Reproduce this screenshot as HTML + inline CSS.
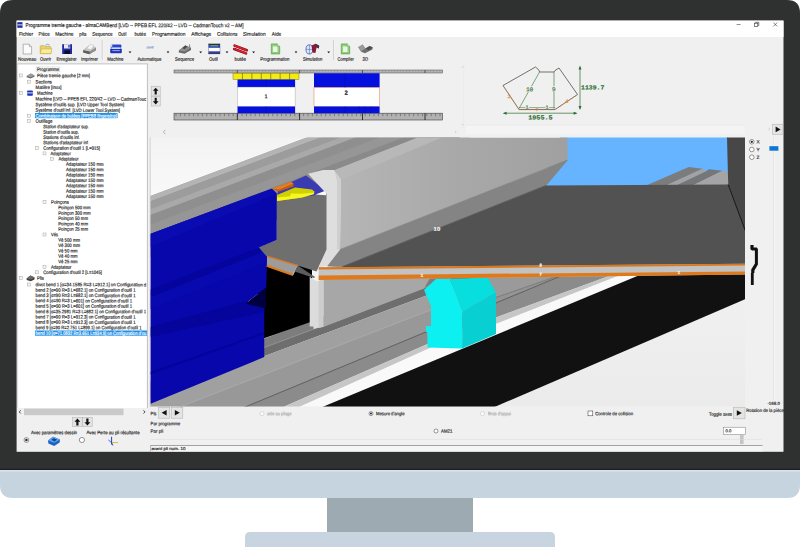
<!DOCTYPE html>
<html lang="fr"><head><meta charset="utf-8"><title>almaCAM Bend</title>
<style>html,body{margin:0;padding:0;background:#fff;}svg{display:block;}text{white-space:pre;}</style></head>
<body>
<svg width="800" height="547" viewBox="0 0 800 547" font-family="'Liberation Sans', sans-serif" text-rendering="geometricPrecision">
<defs>
<clipPath id="vp"><rect x="150.5" y="137.5" width="594.5" height="268.9"/></clipPath>
<clipPath id="lowclip"><polygon points="150,236 318.7,236 318.7,268.5 746,266 746,410 150,410"/></clipPath>
<clipPath id="tree"><rect x="17.5" y="63.7" width="129.5" height="344.2"/></clipPath>
<linearGradient id="gpunch" x1="0" y1="0" x2="1" y2="0"><stop offset="0" stop-color="#b6b6b6"/><stop offset="0.5" stop-color="#a9a9a9"/><stop offset="1" stop-color="#a0a0a0"/></linearGradient>
<linearGradient id="gbg" x1="0" y1="0" x2="0" y2="1"><stop offset="0" stop-color="#f3f3f3"/><stop offset="0.25" stop-color="#fafafa"/><stop offset="0.6" stop-color="#f0f0f0"/><stop offset="1" stop-color="#ebebeb"/></linearGradient>
</defs>
<rect x="0.00" y="0.00" width="800.00" height="547.00" fill="#ffffff" />
<path d="M0,470 V13 Q0,0 13,0 H787 Q800,0 800,13 V470 Z" fill="#2f3030"/>
<rect x="0.00" y="468.80" width="800.00" height="1.40" fill="#1d1d24" />
<path d="M0,470.2 H800 V485 Q800,498 787,498 H13 Q0,498 0,485 Z" fill="#c6d4df"/>
<rect x="0.00" y="470.20" width="800.00" height="1.20" fill="#dde6ee" />
<rect x="327.00" y="498.00" width="146.00" height="34.00" fill="#9daab2" />
<path d="M245,547 V537 Q245,532 250,532 H550 Q555,532 555,537 V547 Z" fill="#c8d5e0"/>
<rect x="16.60" y="20.60" width="766.90" height="431.20" fill="#f0f0f0" />
<rect x="16.60" y="20.60" width="766.90" height="16.40" fill="#ffffff" />
<rect x="17.30" y="22.20" width="5.20" height="5.60" fill="#1c2f9c" />
<rect x="17.30" y="24.40" width="5.20" height="1.00" fill="#e8e8ff" />
<text x="25.50" y="27.02" transform="rotate(0.08 25.50 27.02)" font-size="5.4" fill="#222" textLength="218.00" lengthAdjust="spacingAndGlyphs" stroke="#222" stroke-width="0.16" >Programme tremie gauche - almaCAMBend [LVD -- PPEB EFL 220/42 -- LVD -- CadmanTouch v2 -- AM]</text>
<line x1="736.60" y1="24.50" x2="740.60" y2="24.50" stroke="#444" stroke-width="0.6" />
<rect x="754.6" y="23.2" width="3.2" height="3.2" fill="none" stroke="#333" stroke-width="0.6"/>
<path d="M755.6,23.2 V22.3 H758.8 V25.5 H757.8" fill="none" stroke="#333" stroke-width="0.6"/>
<line x1="773.40" y1="22.60" x2="777.20" y2="26.40" stroke="#333" stroke-width="0.6" />
<line x1="777.20" y1="22.60" x2="773.40" y2="26.40" stroke="#333" stroke-width="0.6" />
<text x="19.00" y="35.65" transform="rotate(0.08 19.00 35.65)" font-size="5.2" fill="#222" textLength="14.00" lengthAdjust="spacingAndGlyphs" stroke="#222" stroke-width="0.16" >Fichier</text>
<text x="38.60" y="35.65" transform="rotate(0.08 38.60 35.65)" font-size="5.2" fill="#222" textLength="11.00" lengthAdjust="spacingAndGlyphs" stroke="#222" stroke-width="0.16" >Pièce</text>
<text x="55.30" y="35.65" transform="rotate(0.08 55.30 35.65)" font-size="5.2" fill="#222" textLength="18.20" lengthAdjust="spacingAndGlyphs" stroke="#222" stroke-width="0.16" >Machine</text>
<text x="79.20" y="35.65" transform="rotate(0.08 79.20 35.65)" font-size="5.2" fill="#222" textLength="7.30" lengthAdjust="spacingAndGlyphs" stroke="#222" stroke-width="0.16" >plis</text>
<text x="92.20" y="35.65" transform="rotate(0.08 92.20 35.65)" font-size="5.2" fill="#222" textLength="20.30" lengthAdjust="spacingAndGlyphs" stroke="#222" stroke-width="0.16" >Sequence</text>
<text x="118.20" y="35.65" transform="rotate(0.08 118.20 35.65)" font-size="5.2" fill="#222" textLength="8.10" lengthAdjust="spacingAndGlyphs" stroke="#222" stroke-width="0.16" >Outil</text>
<text x="134.40" y="35.65" transform="rotate(0.08 134.40 35.65)" font-size="5.2" fill="#222" textLength="11.60" lengthAdjust="spacingAndGlyphs" stroke="#222" stroke-width="0.16" >butée</text>
<text x="152.00" y="35.65" transform="rotate(0.08 152.00 35.65)" font-size="5.2" fill="#222" textLength="33.50" lengthAdjust="spacingAndGlyphs" stroke="#222" stroke-width="0.16" >Programmation</text>
<text x="191.25" y="35.65" transform="rotate(0.08 191.25 35.65)" font-size="5.2" fill="#222" textLength="20.00" lengthAdjust="spacingAndGlyphs" stroke="#222" stroke-width="0.16" >Affichage</text>
<text x="217.00" y="35.65" transform="rotate(0.08 217.00 35.65)" font-size="5.2" fill="#222" textLength="20.50" lengthAdjust="spacingAndGlyphs" stroke="#222" stroke-width="0.16" >Collisions</text>
<text x="243.00" y="35.65" transform="rotate(0.08 243.00 35.65)" font-size="5.2" fill="#222" textLength="22.75" lengthAdjust="spacingAndGlyphs" stroke="#222" stroke-width="0.16" >Simulation</text>
<text x="271.75" y="35.65" transform="rotate(0.08 271.75 35.65)" font-size="5.2" fill="#222" textLength="9.50" lengthAdjust="spacingAndGlyphs" stroke="#222" stroke-width="0.16" >Aide</text>
<line x1="102.30" y1="40.00" x2="102.30" y2="60.00" stroke="#b8b8b8" stroke-width="0.7" />
<line x1="103.00" y1="40.00" x2="103.00" y2="60.00" stroke="#ffffff" stroke-width="0.5" />
<line x1="333.70" y1="40.00" x2="333.70" y2="60.00" stroke="#b8b8b8" stroke-width="0.7" />
<line x1="334.40" y1="40.00" x2="334.40" y2="60.00" stroke="#ffffff" stroke-width="0.5" />
<text x="18.00" y="60.84" transform="rotate(0.08 18.00 60.84)" font-size="4.9" fill="#222" textLength="18.20" lengthAdjust="spacingAndGlyphs" stroke="#222" stroke-width="0.16" >Nouveau</text>
<text x="40.00" y="60.84" transform="rotate(0.08 40.00 60.84)" font-size="4.9" fill="#222" textLength="11.20" lengthAdjust="spacingAndGlyphs" stroke="#222" stroke-width="0.16" >Ouvrir</text>
<text x="56.40" y="60.84" transform="rotate(0.08 56.40 60.84)" font-size="4.9" fill="#222" textLength="20.30" lengthAdjust="spacingAndGlyphs" stroke="#222" stroke-width="0.16" >Enregistrer</text>
<text x="81.00" y="60.84" transform="rotate(0.08 81.00 60.84)" font-size="4.9" fill="#222" textLength="17.00" lengthAdjust="spacingAndGlyphs" stroke="#222" stroke-width="0.16" >Imprimer</text>
<text x="107.30" y="60.84" transform="rotate(0.08 107.30 60.84)" font-size="4.9" fill="#222" textLength="16.20" lengthAdjust="spacingAndGlyphs" stroke="#222" stroke-width="0.16" >Machine</text>
<text x="137.40" y="60.84" transform="rotate(0.08 137.40 60.84)" font-size="4.9" fill="#222" textLength="24.00" lengthAdjust="spacingAndGlyphs" stroke="#222" stroke-width="0.16" >Automatique</text>
<text x="175.00" y="60.84" transform="rotate(0.08 175.00 60.84)" font-size="4.9" fill="#222" textLength="19.00" lengthAdjust="spacingAndGlyphs" stroke="#222" stroke-width="0.16" >Sequence</text>
<text x="209.00" y="60.84" transform="rotate(0.08 209.00 60.84)" font-size="4.9" fill="#222" textLength="8.80" lengthAdjust="spacingAndGlyphs" stroke="#222" stroke-width="0.16" >Outil</text>
<text x="234.60" y="60.84" transform="rotate(0.08 234.60 60.84)" font-size="4.9" fill="#222" textLength="11.40" lengthAdjust="spacingAndGlyphs" stroke="#222" stroke-width="0.16" >butée</text>
<text x="260.30" y="60.84" transform="rotate(0.08 260.30 60.84)" font-size="4.9" fill="#222" textLength="29.20" lengthAdjust="spacingAndGlyphs" stroke="#222" stroke-width="0.16" >Programmation</text>
<text x="302.90" y="60.84" transform="rotate(0.08 302.90 60.84)" font-size="4.9" fill="#222" textLength="19.50" lengthAdjust="spacingAndGlyphs" stroke="#222" stroke-width="0.16" >Simulation</text>
<text x="337.50" y="60.84" transform="rotate(0.08 337.50 60.84)" font-size="4.9" fill="#222" textLength="16.25" lengthAdjust="spacingAndGlyphs" stroke="#222" stroke-width="0.16" >Compiler</text>
<text x="362.50" y="60.84" transform="rotate(0.08 362.50 60.84)" font-size="4.9" fill="#222" textLength="5.50" lengthAdjust="spacingAndGlyphs" stroke="#222" stroke-width="0.16" >3D</text>
<polygon points="128.60,51.60 131.40,51.60 130.00,53.30" fill="#111" />
<polygon points="166.60,51.60 169.40,51.60 168.00,53.30" fill="#111" />
<polygon points="199.30,51.60 202.10,51.60 200.70,53.30" fill="#111" />
<polygon points="225.60,51.60 228.40,51.60 227.00,53.30" fill="#111" />
<polygon points="252.20,51.60 255.00,51.60 253.60,53.30" fill="#111" />
<polygon points="294.60,51.60 297.40,51.60 296.00,53.30" fill="#111" />
<polygon points="327.30,51.60 330.10,51.60 328.70,53.30" fill="#111" />
<path d="M23.2,44.2 H29.3 L31.6,46.6 V54 H23.2 Z" fill="#fbfbfb" stroke="#8a8a8a" stroke-width="0.6"/>
<path d="M29.3,44.2 V46.6 H31.6" fill="#e4e4e4" stroke="#8a8a8a" stroke-width="0.5"/>
<path d="M40.2,53.6 V46.6 Q40.2,45.6 41.2,45.6 H44 L45,46.6 H50 Q51,46.6 51,47.6 V53.6 Z" fill="#e9d36a" stroke="#b89b2e" stroke-width="0.5"/>
<path d="M40.2,53.6 L41.6,48.8 H52 L50.8,53.6 Z" fill="#f7eb9c" stroke="#c3a93a" stroke-width="0.5"/>
<path d="M45.5,45.2 Q47.5,43.4 49.6,45.2" fill="none" stroke="#4aa0e0" stroke-width="0.8"/>
<rect x="62.20" y="44.20" width="9.80" height="9.80" fill="#1c2a9e" />
<rect x="64.00" y="44.20" width="6.20" height="4.30" fill="#e8e8f4" />
<rect x="64.40" y="50.40" width="5.60" height="3.60" fill="#0c0c30" />
<rect x="68.40" y="45.00" width="1.20" height="2.60" fill="#1c2a9e" />
<polygon points="83.20,50.20 89.50,45.20 96.00,47.60 96.00,50.40 89.60,54.20 83.20,52.60" fill="#8d8d8d" />
<polygon points="83.20,50.20 89.50,45.20 96.00,47.60 89.60,51.60" fill="#c9c9c9" />
<polygon points="86.50,48.40 90.50,44.20 94.00,45.60 91.00,49.80" fill="#f4f4f4" stroke="#999" stroke-width="0.3"/>
<polygon points="83.20,50.20 89.60,51.60 89.60,54.20 83.20,52.60" fill="#5e5e5e" />
<rect x="110.60" y="44.40" width="10.80" height="3.40" fill="#2a46c8" rx="1"/>
<rect x="110.20" y="48.60" width="11.60" height="4.60" fill="#1f36b4" rx="1"/>
<rect x="112.00" y="47.60" width="8.00" height="1.20" fill="#dfe6ff" />
<rect x="112.40" y="50.20" width="7.40" height="0.90" fill="#9fb4ff" />
<rect x="110.20" y="44.60" width="2.20" height="2.20" fill="#e9efff" rx="1"/>
<text x="146.60" y="48.54" transform="rotate(0.08 146.60 48.54)" font-size="3.2" fill="#8ea0d6" textLength="7.00" lengthAdjust="spacingAndGlyphs" font-weight="bold" stroke="#8ea0d6" stroke-width="0.16" font-style="italic">Swift</text>
<polygon points="178.80,50.60 185.20,45.60 191.00,47.80 191.00,50.00 184.60,53.80 178.80,52.60" fill="#6a6a6a" />
<polygon points="178.80,50.60 185.20,45.60 191.00,47.80 184.60,51.60" fill="#8f8f8f" />
<polygon points="182.20,48.20 185.20,45.60 187.60,46.60 184.80,49.20" fill="#4c4c4c" />
<line x1="189.60" y1="44.40" x2="189.60" y2="47.00" stroke="#444" stroke-width="0.6" />
<rect x="208.60" y="43.90" width="11.40" height="10.00" fill="#ffffff" stroke="#555" stroke-width="0.4"/>
<rect x="208.60" y="43.90" width="11.40" height="1.20" fill="#303030" />
<rect x="208.60" y="45.10" width="11.40" height="2.70" fill="#2a3cc0" />
<rect x="210.40" y="45.30" width="7.60" height="1.10" fill="#6bb84a" />
<rect x="208.60" y="51.30" width="11.40" height="1.80" fill="#2a3cc0" />
<rect x="208.60" y="53.10" width="11.40" height="0.90" fill="#303030" />
<path d="M234.6,45.6 L246.8,50.2" stroke="#7a0a12" stroke-width="2.6" stroke-linecap="round"/>
<path d="M234.6,45.6 L246.8,50.2" stroke="#d8202c" stroke-width="1.7" stroke-linecap="round"/>
<path d="M234.2,49 L246,53.4" stroke="#7a0a12" stroke-width="2.6" stroke-linecap="round"/>
<path d="M234.2,49 L246,53.4" stroke="#d8202c" stroke-width="1.7" stroke-linecap="round"/>
<path d="M271.3,43.9 H277.1 L279.7,46.4 V53.9 H271.3 Z" fill="#8ed07a" stroke="#4f8f3e" stroke-width="0.6"/>
<rect x="272.90" y="46.40" width="4.60" height="5.60" fill="#e9f7e2" />
<path d="M277.1,43.9 V46.4 H279.7" fill="#c9ecc0" stroke="#4f8f3e" stroke-width="0.4"/>
<path d="M341.3,43.9 H347.1 L349.7,46.4 V53.9 H341.3 Z" fill="#8ed07a" stroke="#4f8f3e" stroke-width="0.6"/>
<rect x="342.90" y="46.40" width="4.60" height="5.60" fill="#e9f7e2" />
<path d="M347.1,43.9 V46.4 H349.7" fill="#c9ecc0" stroke="#4f8f3e" stroke-width="0.4"/>
<ellipse cx="309.4" cy="49.4" rx="3.4" ry="4.6" fill="#dfe9f7" stroke="#3c57b0" stroke-width="0.8"/>
<line x1="309.40" y1="45.00" x2="309.40" y2="54.00" stroke="#3c57b0" stroke-width="0.5" />
<line x1="306.00" y1="49.40" x2="312.80" y2="49.40" stroke="#3c57b0" stroke-width="0.5" />
<polygon points="311.60,45.40 315.60,43.80 319.20,45.80 318.80,48.60 316.60,47.40 315.40,53.00 312.40,52.40" fill="#8a1838" />
<polygon points="315.60,43.80 319.20,45.80 318.80,48.60 317.00,47.20" fill="#3a3a46" />
<polygon points="358.20,47.20 362.60,44.60 365.40,48.40 369.60,46.00 372.80,47.60 372.40,49.60 365.00,53.20 361.20,51.80" fill="#6f6f6f" />
<polygon points="358.20,47.20 362.60,44.60 365.40,48.40 361.20,51.20" fill="#9a9a9a" />
<polygon points="365.40,48.40 369.60,46.00 372.80,47.60 368.60,50.20" fill="#4e4e4e" />
<rect x="17.50" y="63.70" width="129.80" height="344.20" fill="#ffffff" />
<line x1="147.40" y1="63.70" x2="147.40" y2="408.00" stroke="#9a9a9a" stroke-width="0.6" />
<line x1="17.50" y1="63.90" x2="147.40" y2="63.90" stroke="#8c8c8c" stroke-width="0.5" />
<line x1="17.60" y1="63.70" x2="17.60" y2="408.00" stroke="#b0b0b0" stroke-width="0.4" />
<g clip-path="url(#tree)">
<rect x="35.00" y="113.00" width="82.60" height="5.20" fill="#1e90e8" />
<rect x="35.00" y="330.50" width="112.00" height="5.20" fill="#1e90e8" />
<text x="37.00" y="71.04" transform="rotate(0.08 37.00 71.04)" font-size="4.9" fill="#1a1a1a" textLength="22.20" lengthAdjust="spacingAndGlyphs" stroke="#1a1a1a" stroke-width="0.16" >Programme</text>
<text x="37.00" y="77.24" transform="rotate(0.08 37.00 77.24)" font-size="4.9" fill="#1a1a1a" textLength="53.00" lengthAdjust="spacingAndGlyphs" stroke="#1a1a1a" stroke-width="0.16" >Pièce tremie gauche [2 mm]</text>
<rect x="19.50" y="74.00" width="3" height="3" fill="#f4f4f4" stroke="#a8a8a8" stroke-width="0.5"/>
<text x="35.60" y="83.44" transform="rotate(0.08 35.60 83.44)" font-size="4.9" fill="#1a1a1a" textLength="16.40" lengthAdjust="spacingAndGlyphs" stroke="#1a1a1a" stroke-width="0.16" >Sections</text>
<rect x="27.50" y="80.20" width="3" height="3" fill="#f4f4f4" stroke="#a8a8a8" stroke-width="0.5"/>
<text x="35.60" y="89.04" transform="rotate(0.08 35.60 89.04)" font-size="4.9" fill="#1a1a1a" textLength="25.90" lengthAdjust="spacingAndGlyphs" stroke="#1a1a1a" stroke-width="0.16" >Matière [Inox]</text>
<text x="37.00" y="94.74" transform="rotate(0.08 37.00 94.74)" font-size="4.9" fill="#1a1a1a" textLength="15.50" lengthAdjust="spacingAndGlyphs" stroke="#1a1a1a" stroke-width="0.16" >Machine</text>
<rect x="19.50" y="91.50" width="3" height="3" fill="#f4f4f4" stroke="#a8a8a8" stroke-width="0.5"/>
<text x="35.60" y="100.54" transform="rotate(0.08 35.60 100.54)" font-size="4.9" fill="#1a1a1a" textLength="110.60" lengthAdjust="spacingAndGlyphs" stroke="#1a1a1a" stroke-width="0.16" >Machine [LVD -- PPEB EFL 220/42 -- LVD -- CadmanTouc</text>
<text x="35.60" y="106.24" transform="rotate(0.08 35.60 106.24)" font-size="4.9" fill="#1a1a1a" textLength="88.70" lengthAdjust="spacingAndGlyphs" stroke="#1a1a1a" stroke-width="0.16" >Système d'outils sup. [LVD Upper Tool System]</text>
<text x="35.60" y="111.84" transform="rotate(0.08 35.60 111.84)" font-size="4.9" fill="#1a1a1a" textLength="84.40" lengthAdjust="spacingAndGlyphs" stroke="#1a1a1a" stroke-width="0.16" >Système d'outil inf. [LVD Lower Tool System]</text>
<text x="35.60" y="117.44" transform="rotate(0.08 35.60 117.44)" font-size="4.9" fill="#ffffff" textLength="81.40" lengthAdjust="spacingAndGlyphs" stroke="#ffffff" stroke-width="0.16" >Combinaison de butées [PPEB8 fingerstop]</text>
<rect x="27.50" y="114.20" width="3" height="3" fill="#f4f4f4" stroke="#a8a8a8" stroke-width="0.5"/>
<text x="35.60" y="122.84" transform="rotate(0.08 35.60 122.84)" font-size="4.9" fill="#1a1a1a" textLength="16.90" lengthAdjust="spacingAndGlyphs" stroke="#1a1a1a" stroke-width="0.16" >Outillage</text>
<rect x="27.50" y="119.60" width="3" height="3" fill="#f4f4f4" stroke="#a8a8a8" stroke-width="0.5"/>
<text x="43.30" y="128.24" transform="rotate(0.08 43.30 128.24)" font-size="4.9" fill="#1a1a1a" textLength="45.70" lengthAdjust="spacingAndGlyphs" stroke="#1a1a1a" stroke-width="0.16" >Station d'adaptateur sup.</text>
<text x="43.30" y="133.64" transform="rotate(0.08 43.30 133.64)" font-size="4.9" fill="#1a1a1a" textLength="35.70" lengthAdjust="spacingAndGlyphs" stroke="#1a1a1a" stroke-width="0.16" >Station d'outils sup.</text>
<text x="43.30" y="138.94" transform="rotate(0.08 43.30 138.94)" font-size="4.9" fill="#1a1a1a" textLength="36.70" lengthAdjust="spacingAndGlyphs" stroke="#1a1a1a" stroke-width="0.16" >Stations d'outils inf.</text>
<text x="43.30" y="144.24" transform="rotate(0.08 43.30 144.24)" font-size="4.9" fill="#1a1a1a" textLength="45.70" lengthAdjust="spacingAndGlyphs" stroke="#1a1a1a" stroke-width="0.16" >Stations d'adaptateur inf.</text>
<text x="43.30" y="149.74" transform="rotate(0.08 43.30 149.74)" font-size="4.9" fill="#1a1a1a" textLength="56.70" lengthAdjust="spacingAndGlyphs" stroke="#1a1a1a" stroke-width="0.16" >Configuration d'outil 1 [L=915]</text>
<rect x="35.50" y="146.50" width="3" height="3" fill="#f4f4f4" stroke="#a8a8a8" stroke-width="0.5"/>
<text x="50.60" y="155.14" transform="rotate(0.08 50.60 155.14)" font-size="4.9" fill="#1a1a1a" textLength="20.20" lengthAdjust="spacingAndGlyphs" stroke="#1a1a1a" stroke-width="0.16" >Adaptateur</text>
<rect x="43.00" y="151.90" width="3" height="3" fill="#f4f4f4" stroke="#a8a8a8" stroke-width="0.5"/>
<text x="58.40" y="160.54" transform="rotate(0.08 58.40 160.54)" font-size="4.9" fill="#1a1a1a" textLength="20.20" lengthAdjust="spacingAndGlyphs" stroke="#1a1a1a" stroke-width="0.16" >Adaptateur</text>
<rect x="50.50" y="157.30" width="3" height="3" fill="#f4f4f4" stroke="#a8a8a8" stroke-width="0.5"/>
<text x="66.00" y="165.84" transform="rotate(0.08 66.00 165.84)" font-size="4.9" fill="#1a1a1a" textLength="37.50" lengthAdjust="spacingAndGlyphs" stroke="#1a1a1a" stroke-width="0.16" >Adaptateur 150 mm</text>
<text x="66.00" y="171.21" transform="rotate(0.08 66.00 171.21)" font-size="4.9" fill="#1a1a1a" textLength="37.50" lengthAdjust="spacingAndGlyphs" stroke="#1a1a1a" stroke-width="0.16" >Adaptateur 150 mm</text>
<text x="66.00" y="176.58" transform="rotate(0.08 66.00 176.58)" font-size="4.9" fill="#1a1a1a" textLength="37.50" lengthAdjust="spacingAndGlyphs" stroke="#1a1a1a" stroke-width="0.16" >Adaptateur 150 mm</text>
<text x="66.00" y="181.95" transform="rotate(0.08 66.00 181.95)" font-size="4.9" fill="#1a1a1a" textLength="37.50" lengthAdjust="spacingAndGlyphs" stroke="#1a1a1a" stroke-width="0.16" >Adaptateur 150 mm</text>
<text x="66.00" y="187.32" transform="rotate(0.08 66.00 187.32)" font-size="4.9" fill="#1a1a1a" textLength="37.50" lengthAdjust="spacingAndGlyphs" stroke="#1a1a1a" stroke-width="0.16" >Adaptateur 150 mm</text>
<text x="66.00" y="192.69" transform="rotate(0.08 66.00 192.69)" font-size="4.9" fill="#1a1a1a" textLength="37.50" lengthAdjust="spacingAndGlyphs" stroke="#1a1a1a" stroke-width="0.16" >Adaptateur 150 mm</text>
<text x="66.00" y="198.06" transform="rotate(0.08 66.00 198.06)" font-size="4.9" fill="#1a1a1a" textLength="37.50" lengthAdjust="spacingAndGlyphs" stroke="#1a1a1a" stroke-width="0.16" >Adaptateur 150 mm</text>
<text x="51.00" y="203.74" transform="rotate(0.08 51.00 203.74)" font-size="4.9" fill="#1a1a1a" textLength="18.00" lengthAdjust="spacingAndGlyphs" stroke="#1a1a1a" stroke-width="0.16" >Poinçons</text>
<rect x="43.00" y="200.50" width="3" height="3" fill="#f4f4f4" stroke="#a8a8a8" stroke-width="0.5"/>
<text x="58.20" y="209.24" transform="rotate(0.08 58.20 209.24)" font-size="4.9" fill="#1a1a1a" textLength="32.30" lengthAdjust="spacingAndGlyphs" stroke="#1a1a1a" stroke-width="0.16" >Poinçon 500 mm</text>
<text x="58.20" y="214.64" transform="rotate(0.08 58.20 214.64)" font-size="4.9" fill="#1a1a1a" textLength="32.30" lengthAdjust="spacingAndGlyphs" stroke="#1a1a1a" stroke-width="0.16" >Poinçon 300 mm</text>
<text x="58.20" y="220.04" transform="rotate(0.08 58.20 220.04)" font-size="4.9" fill="#1a1a1a" textLength="29.80" lengthAdjust="spacingAndGlyphs" stroke="#1a1a1a" stroke-width="0.16" >Poinçon 50 mm</text>
<text x="58.20" y="225.44" transform="rotate(0.08 58.20 225.44)" font-size="4.9" fill="#1a1a1a" textLength="29.80" lengthAdjust="spacingAndGlyphs" stroke="#1a1a1a" stroke-width="0.16" >Poinçon 40 mm</text>
<text x="58.20" y="230.84" transform="rotate(0.08 58.20 230.84)" font-size="4.9" fill="#1a1a1a" textLength="29.80" lengthAdjust="spacingAndGlyphs" stroke="#1a1a1a" stroke-width="0.16" >Poinçon 25 mm</text>
<text x="51.00" y="236.24" transform="rotate(0.08 51.00 236.24)" font-size="4.9" fill="#1a1a1a" textLength="7.00" lengthAdjust="spacingAndGlyphs" stroke="#1a1a1a" stroke-width="0.16" >Vés</text>
<rect x="43.00" y="233.00" width="3" height="3" fill="#f4f4f4" stroke="#a8a8a8" stroke-width="0.5"/>
<text x="58.20" y="241.64" transform="rotate(0.08 58.20 241.64)" font-size="4.9" fill="#1a1a1a" textLength="21.80" lengthAdjust="spacingAndGlyphs" stroke="#1a1a1a" stroke-width="0.16" >Vé 500 mm</text>
<text x="58.20" y="247.04" transform="rotate(0.08 58.20 247.04)" font-size="4.9" fill="#1a1a1a" textLength="21.80" lengthAdjust="spacingAndGlyphs" stroke="#1a1a1a" stroke-width="0.16" >Vé 300 mm</text>
<text x="58.20" y="252.44" transform="rotate(0.08 58.20 252.44)" font-size="4.9" fill="#1a1a1a" textLength="19.30" lengthAdjust="spacingAndGlyphs" stroke="#1a1a1a" stroke-width="0.16" >Vé 50 mm</text>
<text x="58.20" y="257.84" transform="rotate(0.08 58.20 257.84)" font-size="4.9" fill="#1a1a1a" textLength="19.30" lengthAdjust="spacingAndGlyphs" stroke="#1a1a1a" stroke-width="0.16" >Vé 40 mm</text>
<text x="58.20" y="263.24" transform="rotate(0.08 58.20 263.24)" font-size="4.9" fill="#1a1a1a" textLength="19.30" lengthAdjust="spacingAndGlyphs" stroke="#1a1a1a" stroke-width="0.16" >Vé 25 mm</text>
<text x="51.00" y="268.64" transform="rotate(0.08 51.00 268.64)" font-size="4.9" fill="#1a1a1a" textLength="20.50" lengthAdjust="spacingAndGlyphs" stroke="#1a1a1a" stroke-width="0.16" >Adaptateur</text>
<rect x="43.00" y="265.40" width="3" height="3" fill="#f4f4f4" stroke="#a8a8a8" stroke-width="0.5"/>
<text x="43.30" y="274.04" transform="rotate(0.08 43.30 274.04)" font-size="4.9" fill="#1a1a1a" textLength="58.70" lengthAdjust="spacingAndGlyphs" stroke="#1a1a1a" stroke-width="0.16" >Configuration d'outil 2 [L=1045]</text>
<rect x="35.50" y="270.80" width="3" height="3" fill="#f4f4f4" stroke="#a8a8a8" stroke-width="0.5"/>
<text x="37.00" y="279.74" transform="rotate(0.08 37.00 279.74)" font-size="4.9" fill="#1a1a1a" textLength="7.00" lengthAdjust="spacingAndGlyphs" stroke="#1a1a1a" stroke-width="0.16" >Plis</text>
<rect x="19.50" y="276.50" width="3" height="3" fill="#f4f4f4" stroke="#a8a8a8" stroke-width="0.5"/>
<text x="35.60" y="286.24" transform="rotate(0.08 35.60 286.24)" font-size="4.9" fill="#1a1a1a" textLength="110.60" lengthAdjust="spacingAndGlyphs" stroke="#1a1a1a" stroke-width="0.16" >divot bend 1 [α=34.1585 R=3 L=912.1] on Configuration d</text>
<rect x="27.50" y="283.00" width="3" height="3" fill="#f4f4f4" stroke="#a8a8a8" stroke-width="0.5"/>
<text x="35.60" y="291.74" transform="rotate(0.08 35.60 291.74)" font-size="4.9" fill="#1a1a1a" textLength="99.90" lengthAdjust="spacingAndGlyphs" stroke="#1a1a1a" stroke-width="0.16" >bend 2 [α=90 R=3 L=682.1] on Configuration d'outil 1</text>
<text x="35.60" y="297.04" transform="rotate(0.08 35.60 297.04)" font-size="4.9" fill="#1a1a1a" textLength="99.90" lengthAdjust="spacingAndGlyphs" stroke="#1a1a1a" stroke-width="0.16" >bend 3 [α=90 R=3 L=682.1] on Configuration d'outil 1</text>
<text x="35.60" y="302.34" transform="rotate(0.08 35.60 302.34)" font-size="4.9" fill="#1a1a1a" textLength="96.40" lengthAdjust="spacingAndGlyphs" stroke="#1a1a1a" stroke-width="0.16" >bend 4 [α=90 R=3 L=601] on Configuration d'outil 1</text>
<text x="35.60" y="307.74" transform="rotate(0.08 35.60 307.74)" font-size="4.9" fill="#1a1a1a" textLength="96.40" lengthAdjust="spacingAndGlyphs" stroke="#1a1a1a" stroke-width="0.16" >bend 5 [α=90 R=3 L=601] on Configuration d'outil 1</text>
<text x="35.60" y="313.14" transform="rotate(0.08 35.60 313.14)" font-size="4.9" fill="#1a1a1a" textLength="110.40" lengthAdjust="spacingAndGlyphs" stroke="#1a1a1a" stroke-width="0.16" >bend 6 [α=35.2981 R=3 L=682.1] on Configuration d'outil 1</text>
<text x="35.60" y="318.54" transform="rotate(0.08 35.60 318.54)" font-size="4.9" fill="#1a1a1a" textLength="99.90" lengthAdjust="spacingAndGlyphs" stroke="#1a1a1a" stroke-width="0.16" >bend 7 [α=90 R=3 L=912.3] on Configuration d'outil 1</text>
<text x="35.60" y="323.84" transform="rotate(0.08 35.60 323.84)" font-size="4.9" fill="#1a1a1a" textLength="99.90" lengthAdjust="spacingAndGlyphs" stroke="#1a1a1a" stroke-width="0.16" >bend 8 [α=90 R=3 L=912.3] on Configuration d'outil 1</text>
<text x="35.60" y="329.24" transform="rotate(0.08 35.60 329.24)" font-size="4.9" fill="#1a1a1a" textLength="105.90" lengthAdjust="spacingAndGlyphs" stroke="#1a1a1a" stroke-width="0.16" >bend 9 [α=90 R=2.751 L=899.1] on Configuration d'outil 1</text>
<text x="35.60" y="334.84" transform="rotate(0.08 35.60 334.84)" font-size="4.9" fill="#ffffff" textLength="110.60" lengthAdjust="spacingAndGlyphs" stroke="#ffffff" stroke-width="0.16" >bend 10 [α=71.0692 R=3.651 L=934.9] on Configuration d'ou</text>
<rect x="36.4" y="66.9" width="23.4" height="4.9" fill="none" stroke="#777" stroke-width="0.4" stroke-dasharray="0.6,0.6"/>
<polygon points="26.60,75.90 30.80,73.40 34.60,75.40 34.40,76.80 30.40,78.40 26.60,77.20" fill="#6c6c6c" />
<polygon points="26.60,75.90 30.80,73.40 34.60,75.40 30.40,77.20" fill="#9c9c9c" />
<rect x="27.20" y="90.40" width="5.60" height="5.40" fill="#1e34b4" rx="0.8"/>
<rect x="27.20" y="92.40" width="5.60" height="1.00" fill="#dfe6ff" />
<polygon points="26.60,278.40 30.40,275.60 34.60,277.40 34.40,279.40 30.80,281.20 26.60,280.00" fill="#3e3e3e" />
<polygon points="26.60,278.40 30.40,275.60 34.60,277.40 30.80,279.60" fill="#6a6a6a" />
</g>
<rect x="17.50" y="408.00" width="129.80" height="7.80" fill="#f0f0f0" />
<rect x="24.00" y="408.60" width="99.50" height="6.60" fill="#c9c9c9" />
<path d="M20.8,410.3 L19.2,411.9 L20.8,413.5" fill="none" stroke="#222" stroke-width="0.8"/>
<path d="M143.4,410.3 L145,411.9 L143.4,413.5" fill="none" stroke="#222" stroke-width="0.8"/>
<rect x="72.60" y="417.60" width="9.60" height="9.00" fill="#e4e4e4" stroke="#adadad" stroke-width="0.5"/>
<rect x="82.60" y="417.60" width="9.60" height="9.00" fill="#e4e4e4" stroke="#adadad" stroke-width="0.5"/>
<polygon points="77.40,418.59 80.37,421.83 78.48,421.83 78.48,425.61 76.32,425.61 76.32,421.83 74.43,421.83" fill="#111" />
<polygon points="87.40,425.61 90.37,422.37 88.48,422.37 88.48,418.59 86.32,418.59 86.32,422.37 84.43,422.37" fill="#111" />
<text x="31.00" y="434.14" transform="rotate(0.08 31.00 434.14)" font-size="4.9" fill="#1a1a1a" textLength="46.00" lengthAdjust="spacingAndGlyphs" stroke="#1a1a1a" stroke-width="0.16" >Avec paramètres dessin</text>
<text x="86.40" y="434.14" transform="rotate(0.08 86.40 434.14)" font-size="4.9" fill="#1a1a1a" textLength="53.20" lengthAdjust="spacingAndGlyphs" stroke="#1a1a1a" stroke-width="0.16" >Avec Perte au pli résultante</text>
<circle cx="26.40" cy="440.00" r="2.4" fill="#ffffff" stroke="#333" stroke-width="0.5"/>
<circle cx="26.40" cy="440.00" r="1.20" fill="#222"/>
<circle cx="81.90" cy="440.00" r="2.6" fill="#ffffff" stroke="#333" stroke-width="0.5"/>
<polygon points="48.00,440.40 53.00,436.80 60.00,439.60 59.60,442.40 54.20,446.00 48.40,443.40" fill="#1d63c4" />
<polygon points="48.00,440.40 53.00,436.80 60.00,439.60 54.40,442.80" fill="#5aa2ec" />
<polygon points="51.40,439.80 53.60,438.20 57.00,439.60 54.60,441.40" fill="#1a3f8e" />
<line x1="111.60" y1="436.80" x2="111.60" y2="444.60" stroke="#1c3fc0" stroke-width="1.0" />
<line x1="111.60" y1="442.60" x2="118.00" y2="442.60" stroke="#e0b020" stroke-width="0.9" />
<line x1="111.60" y1="442.60" x2="108.40" y2="440.00" stroke="#1c3fc0" stroke-width="0.8" />
<line x1="111.60" y1="442.60" x2="113.00" y2="445.60" stroke="#1c3fc0" stroke-width="0.8" />
<rect x="151.20" y="86.20" width="9.00" height="9.80" fill="#e4e4e4" stroke="#adadad" stroke-width="0.5"/>
<rect x="151.20" y="96.20" width="9.00" height="9.80" fill="#e4e4e4" stroke="#adadad" stroke-width="0.5"/>
<polygon points="155.70,87.72 158.56,90.84 156.74,90.84 156.74,94.48 154.66,94.48 154.66,90.84 152.84,90.84" fill="#111" />
<polygon points="155.70,104.48 158.56,101.36 156.74,101.36 156.74,97.72 154.66,97.72 154.66,101.36 152.84,101.36" fill="#111" />
<rect x="174.00" y="70.00" width="268.50" height="3.00" fill="#b4b4b4" stroke="#4a4a4a" stroke-width="0.5"/>
<line x1="175.50" y1="70.20" x2="175.50" y2="71.60" stroke="#777" stroke-width="0.35" />
<line x1="178.50" y1="70.20" x2="178.50" y2="71.60" stroke="#777" stroke-width="0.35" />
<line x1="181.50" y1="70.20" x2="181.50" y2="71.60" stroke="#777" stroke-width="0.35" />
<line x1="184.50" y1="70.20" x2="184.50" y2="71.60" stroke="#777" stroke-width="0.35" />
<line x1="187.50" y1="70.20" x2="187.50" y2="71.60" stroke="#777" stroke-width="0.35" />
<line x1="190.50" y1="70.20" x2="190.50" y2="71.60" stroke="#777" stroke-width="0.35" />
<line x1="193.50" y1="70.20" x2="193.50" y2="71.60" stroke="#777" stroke-width="0.35" />
<line x1="196.50" y1="70.20" x2="196.50" y2="71.60" stroke="#777" stroke-width="0.35" />
<line x1="199.50" y1="70.20" x2="199.50" y2="71.60" stroke="#777" stroke-width="0.35" />
<line x1="202.50" y1="70.20" x2="202.50" y2="71.60" stroke="#777" stroke-width="0.35" />
<line x1="205.50" y1="70.20" x2="205.50" y2="71.60" stroke="#777" stroke-width="0.35" />
<line x1="208.50" y1="70.20" x2="208.50" y2="71.60" stroke="#777" stroke-width="0.35" />
<line x1="211.50" y1="70.20" x2="211.50" y2="71.60" stroke="#777" stroke-width="0.35" />
<line x1="214.50" y1="70.20" x2="214.50" y2="71.60" stroke="#777" stroke-width="0.35" />
<line x1="217.50" y1="70.20" x2="217.50" y2="71.60" stroke="#777" stroke-width="0.35" />
<line x1="220.50" y1="70.20" x2="220.50" y2="71.60" stroke="#777" stroke-width="0.35" />
<line x1="223.50" y1="70.20" x2="223.50" y2="71.60" stroke="#777" stroke-width="0.35" />
<line x1="226.50" y1="70.20" x2="226.50" y2="71.60" stroke="#777" stroke-width="0.35" />
<line x1="229.50" y1="70.20" x2="229.50" y2="71.60" stroke="#777" stroke-width="0.35" />
<line x1="232.50" y1="70.20" x2="232.50" y2="71.60" stroke="#777" stroke-width="0.35" />
<line x1="235.50" y1="70.20" x2="235.50" y2="71.60" stroke="#777" stroke-width="0.35" />
<line x1="238.50" y1="70.20" x2="238.50" y2="71.60" stroke="#777" stroke-width="0.35" />
<line x1="241.50" y1="70.20" x2="241.50" y2="71.60" stroke="#777" stroke-width="0.35" />
<line x1="244.50" y1="70.20" x2="244.50" y2="71.60" stroke="#777" stroke-width="0.35" />
<line x1="247.50" y1="70.20" x2="247.50" y2="71.60" stroke="#777" stroke-width="0.35" />
<line x1="250.50" y1="70.20" x2="250.50" y2="71.60" stroke="#777" stroke-width="0.35" />
<line x1="253.50" y1="70.20" x2="253.50" y2="71.60" stroke="#777" stroke-width="0.35" />
<line x1="256.50" y1="70.20" x2="256.50" y2="71.60" stroke="#777" stroke-width="0.35" />
<line x1="259.50" y1="70.20" x2="259.50" y2="71.60" stroke="#777" stroke-width="0.35" />
<line x1="262.50" y1="70.20" x2="262.50" y2="71.60" stroke="#777" stroke-width="0.35" />
<line x1="265.50" y1="70.20" x2="265.50" y2="71.60" stroke="#777" stroke-width="0.35" />
<line x1="268.50" y1="70.20" x2="268.50" y2="71.60" stroke="#777" stroke-width="0.35" />
<line x1="271.50" y1="70.20" x2="271.50" y2="71.60" stroke="#777" stroke-width="0.35" />
<line x1="274.50" y1="70.20" x2="274.50" y2="71.60" stroke="#777" stroke-width="0.35" />
<line x1="277.50" y1="70.20" x2="277.50" y2="71.60" stroke="#777" stroke-width="0.35" />
<line x1="280.50" y1="70.20" x2="280.50" y2="71.60" stroke="#777" stroke-width="0.35" />
<line x1="283.50" y1="70.20" x2="283.50" y2="71.60" stroke="#777" stroke-width="0.35" />
<line x1="286.50" y1="70.20" x2="286.50" y2="71.60" stroke="#777" stroke-width="0.35" />
<line x1="289.50" y1="70.20" x2="289.50" y2="71.60" stroke="#777" stroke-width="0.35" />
<line x1="292.50" y1="70.20" x2="292.50" y2="71.60" stroke="#777" stroke-width="0.35" />
<line x1="295.50" y1="70.20" x2="295.50" y2="71.60" stroke="#777" stroke-width="0.35" />
<line x1="298.50" y1="70.20" x2="298.50" y2="71.60" stroke="#777" stroke-width="0.35" />
<line x1="301.50" y1="70.20" x2="301.50" y2="71.60" stroke="#777" stroke-width="0.35" />
<line x1="304.50" y1="70.20" x2="304.50" y2="71.60" stroke="#777" stroke-width="0.35" />
<line x1="307.50" y1="70.20" x2="307.50" y2="71.60" stroke="#777" stroke-width="0.35" />
<line x1="310.50" y1="70.20" x2="310.50" y2="71.60" stroke="#777" stroke-width="0.35" />
<line x1="313.50" y1="70.20" x2="313.50" y2="71.60" stroke="#777" stroke-width="0.35" />
<line x1="316.50" y1="70.20" x2="316.50" y2="71.60" stroke="#777" stroke-width="0.35" />
<line x1="319.50" y1="70.20" x2="319.50" y2="71.60" stroke="#777" stroke-width="0.35" />
<line x1="322.50" y1="70.20" x2="322.50" y2="71.60" stroke="#777" stroke-width="0.35" />
<line x1="325.50" y1="70.20" x2="325.50" y2="71.60" stroke="#777" stroke-width="0.35" />
<line x1="328.50" y1="70.20" x2="328.50" y2="71.60" stroke="#777" stroke-width="0.35" />
<line x1="331.50" y1="70.20" x2="331.50" y2="71.60" stroke="#777" stroke-width="0.35" />
<line x1="334.50" y1="70.20" x2="334.50" y2="71.60" stroke="#777" stroke-width="0.35" />
<line x1="337.50" y1="70.20" x2="337.50" y2="71.60" stroke="#777" stroke-width="0.35" />
<line x1="340.50" y1="70.20" x2="340.50" y2="71.60" stroke="#777" stroke-width="0.35" />
<line x1="343.50" y1="70.20" x2="343.50" y2="71.60" stroke="#777" stroke-width="0.35" />
<line x1="346.50" y1="70.20" x2="346.50" y2="71.60" stroke="#777" stroke-width="0.35" />
<line x1="349.50" y1="70.20" x2="349.50" y2="71.60" stroke="#777" stroke-width="0.35" />
<line x1="352.50" y1="70.20" x2="352.50" y2="71.60" stroke="#777" stroke-width="0.35" />
<line x1="355.50" y1="70.20" x2="355.50" y2="71.60" stroke="#777" stroke-width="0.35" />
<line x1="358.50" y1="70.20" x2="358.50" y2="71.60" stroke="#777" stroke-width="0.35" />
<line x1="361.50" y1="70.20" x2="361.50" y2="71.60" stroke="#777" stroke-width="0.35" />
<line x1="364.50" y1="70.20" x2="364.50" y2="71.60" stroke="#777" stroke-width="0.35" />
<line x1="367.50" y1="70.20" x2="367.50" y2="71.60" stroke="#777" stroke-width="0.35" />
<line x1="370.50" y1="70.20" x2="370.50" y2="71.60" stroke="#777" stroke-width="0.35" />
<line x1="373.50" y1="70.20" x2="373.50" y2="71.60" stroke="#777" stroke-width="0.35" />
<line x1="376.50" y1="70.20" x2="376.50" y2="71.60" stroke="#777" stroke-width="0.35" />
<line x1="379.50" y1="70.20" x2="379.50" y2="71.60" stroke="#777" stroke-width="0.35" />
<line x1="382.50" y1="70.20" x2="382.50" y2="71.60" stroke="#777" stroke-width="0.35" />
<line x1="385.50" y1="70.20" x2="385.50" y2="71.60" stroke="#777" stroke-width="0.35" />
<line x1="388.50" y1="70.20" x2="388.50" y2="71.60" stroke="#777" stroke-width="0.35" />
<line x1="391.50" y1="70.20" x2="391.50" y2="71.60" stroke="#777" stroke-width="0.35" />
<line x1="394.50" y1="70.20" x2="394.50" y2="71.60" stroke="#777" stroke-width="0.35" />
<line x1="397.50" y1="70.20" x2="397.50" y2="71.60" stroke="#777" stroke-width="0.35" />
<line x1="400.50" y1="70.20" x2="400.50" y2="71.60" stroke="#777" stroke-width="0.35" />
<line x1="403.50" y1="70.20" x2="403.50" y2="71.60" stroke="#777" stroke-width="0.35" />
<line x1="406.50" y1="70.20" x2="406.50" y2="71.60" stroke="#777" stroke-width="0.35" />
<line x1="409.50" y1="70.20" x2="409.50" y2="71.60" stroke="#777" stroke-width="0.35" />
<line x1="412.50" y1="70.20" x2="412.50" y2="71.60" stroke="#777" stroke-width="0.35" />
<line x1="415.50" y1="70.20" x2="415.50" y2="71.60" stroke="#777" stroke-width="0.35" />
<line x1="418.50" y1="70.20" x2="418.50" y2="71.60" stroke="#777" stroke-width="0.35" />
<line x1="421.50" y1="70.20" x2="421.50" y2="71.60" stroke="#777" stroke-width="0.35" />
<line x1="424.50" y1="70.20" x2="424.50" y2="71.60" stroke="#777" stroke-width="0.35" />
<line x1="427.50" y1="70.20" x2="427.50" y2="71.60" stroke="#777" stroke-width="0.35" />
<line x1="430.50" y1="70.20" x2="430.50" y2="71.60" stroke="#777" stroke-width="0.35" />
<line x1="433.50" y1="70.20" x2="433.50" y2="71.60" stroke="#777" stroke-width="0.35" />
<line x1="436.50" y1="70.20" x2="436.50" y2="71.60" stroke="#777" stroke-width="0.35" />
<line x1="439.50" y1="70.20" x2="439.50" y2="71.60" stroke="#777" stroke-width="0.35" />
<line x1="442.50" y1="70.20" x2="442.50" y2="71.60" stroke="#777" stroke-width="0.35" />
<rect x="174.00" y="113.20" width="268.50" height="6.80" fill="#b2b2b2" stroke="#3c3c3c" stroke-width="0.6"/>
<line x1="176.00" y1="113.60" x2="176.00" y2="116.20" stroke="#4a4a4a" stroke-width="0.55" />
<line x1="180.40" y1="113.60" x2="180.40" y2="116.20" stroke="#4a4a4a" stroke-width="0.55" />
<line x1="184.80" y1="113.60" x2="184.80" y2="116.20" stroke="#4a4a4a" stroke-width="0.55" />
<line x1="189.20" y1="113.60" x2="189.20" y2="116.20" stroke="#4a4a4a" stroke-width="0.55" />
<line x1="193.60" y1="113.60" x2="193.60" y2="116.20" stroke="#4a4a4a" stroke-width="0.55" />
<line x1="198.00" y1="113.60" x2="198.00" y2="116.20" stroke="#4a4a4a" stroke-width="0.55" />
<line x1="202.40" y1="113.60" x2="202.40" y2="116.20" stroke="#4a4a4a" stroke-width="0.55" />
<line x1="206.80" y1="113.60" x2="206.80" y2="116.20" stroke="#4a4a4a" stroke-width="0.55" />
<line x1="211.20" y1="113.60" x2="211.20" y2="116.20" stroke="#4a4a4a" stroke-width="0.55" />
<line x1="215.60" y1="113.60" x2="215.60" y2="116.20" stroke="#4a4a4a" stroke-width="0.55" />
<line x1="220.00" y1="113.60" x2="220.00" y2="116.20" stroke="#4a4a4a" stroke-width="0.55" />
<line x1="224.40" y1="113.60" x2="224.40" y2="116.20" stroke="#4a4a4a" stroke-width="0.55" />
<line x1="228.80" y1="113.60" x2="228.80" y2="116.20" stroke="#4a4a4a" stroke-width="0.55" />
<line x1="233.20" y1="113.60" x2="233.20" y2="116.20" stroke="#4a4a4a" stroke-width="0.55" />
<line x1="237.60" y1="113.60" x2="237.60" y2="116.20" stroke="#4a4a4a" stroke-width="0.55" />
<line x1="242.00" y1="113.60" x2="242.00" y2="116.20" stroke="#4a4a4a" stroke-width="0.55" />
<line x1="246.40" y1="113.60" x2="246.40" y2="116.20" stroke="#4a4a4a" stroke-width="0.55" />
<line x1="250.80" y1="113.60" x2="250.80" y2="116.20" stroke="#4a4a4a" stroke-width="0.55" />
<line x1="255.20" y1="113.60" x2="255.20" y2="116.20" stroke="#4a4a4a" stroke-width="0.55" />
<line x1="259.60" y1="113.60" x2="259.60" y2="116.20" stroke="#4a4a4a" stroke-width="0.55" />
<line x1="264.00" y1="113.60" x2="264.00" y2="116.20" stroke="#4a4a4a" stroke-width="0.55" />
<line x1="268.40" y1="113.60" x2="268.40" y2="116.20" stroke="#4a4a4a" stroke-width="0.55" />
<line x1="272.80" y1="113.60" x2="272.80" y2="116.20" stroke="#4a4a4a" stroke-width="0.55" />
<line x1="277.20" y1="113.60" x2="277.20" y2="116.20" stroke="#4a4a4a" stroke-width="0.55" />
<line x1="281.60" y1="113.60" x2="281.60" y2="116.20" stroke="#4a4a4a" stroke-width="0.55" />
<line x1="286.00" y1="113.60" x2="286.00" y2="116.20" stroke="#4a4a4a" stroke-width="0.55" />
<line x1="290.40" y1="113.60" x2="290.40" y2="116.20" stroke="#4a4a4a" stroke-width="0.55" />
<line x1="294.80" y1="113.60" x2="294.80" y2="116.20" stroke="#4a4a4a" stroke-width="0.55" />
<line x1="299.20" y1="113.60" x2="299.20" y2="116.20" stroke="#4a4a4a" stroke-width="0.55" />
<line x1="303.60" y1="113.60" x2="303.60" y2="116.20" stroke="#4a4a4a" stroke-width="0.55" />
<line x1="308.00" y1="113.60" x2="308.00" y2="116.20" stroke="#4a4a4a" stroke-width="0.55" />
<line x1="312.40" y1="113.60" x2="312.40" y2="116.20" stroke="#4a4a4a" stroke-width="0.55" />
<line x1="316.80" y1="113.60" x2="316.80" y2="116.20" stroke="#4a4a4a" stroke-width="0.55" />
<line x1="321.20" y1="113.60" x2="321.20" y2="116.20" stroke="#4a4a4a" stroke-width="0.55" />
<line x1="325.60" y1="113.60" x2="325.60" y2="116.20" stroke="#4a4a4a" stroke-width="0.55" />
<line x1="330.00" y1="113.60" x2="330.00" y2="116.20" stroke="#4a4a4a" stroke-width="0.55" />
<line x1="334.40" y1="113.60" x2="334.40" y2="116.20" stroke="#4a4a4a" stroke-width="0.55" />
<line x1="338.80" y1="113.60" x2="338.80" y2="116.20" stroke="#4a4a4a" stroke-width="0.55" />
<line x1="343.20" y1="113.60" x2="343.20" y2="116.20" stroke="#4a4a4a" stroke-width="0.55" />
<line x1="347.60" y1="113.60" x2="347.60" y2="116.20" stroke="#4a4a4a" stroke-width="0.55" />
<line x1="352.00" y1="113.60" x2="352.00" y2="116.20" stroke="#4a4a4a" stroke-width="0.55" />
<line x1="356.40" y1="113.60" x2="356.40" y2="116.20" stroke="#4a4a4a" stroke-width="0.55" />
<line x1="360.80" y1="113.60" x2="360.80" y2="116.20" stroke="#4a4a4a" stroke-width="0.55" />
<line x1="365.20" y1="113.60" x2="365.20" y2="116.20" stroke="#4a4a4a" stroke-width="0.55" />
<line x1="369.60" y1="113.60" x2="369.60" y2="116.20" stroke="#4a4a4a" stroke-width="0.55" />
<line x1="374.00" y1="113.60" x2="374.00" y2="116.20" stroke="#4a4a4a" stroke-width="0.55" />
<line x1="378.40" y1="113.60" x2="378.40" y2="116.20" stroke="#4a4a4a" stroke-width="0.55" />
<line x1="382.80" y1="113.60" x2="382.80" y2="116.20" stroke="#4a4a4a" stroke-width="0.55" />
<line x1="387.20" y1="113.60" x2="387.20" y2="116.20" stroke="#4a4a4a" stroke-width="0.55" />
<line x1="391.60" y1="113.60" x2="391.60" y2="116.20" stroke="#4a4a4a" stroke-width="0.55" />
<line x1="396.00" y1="113.60" x2="396.00" y2="116.20" stroke="#4a4a4a" stroke-width="0.55" />
<line x1="400.40" y1="113.60" x2="400.40" y2="116.20" stroke="#4a4a4a" stroke-width="0.55" />
<line x1="404.80" y1="113.60" x2="404.80" y2="116.20" stroke="#4a4a4a" stroke-width="0.55" />
<line x1="409.20" y1="113.60" x2="409.20" y2="116.20" stroke="#4a4a4a" stroke-width="0.55" />
<line x1="413.60" y1="113.60" x2="413.60" y2="116.20" stroke="#4a4a4a" stroke-width="0.55" />
<line x1="418.00" y1="113.60" x2="418.00" y2="116.20" stroke="#4a4a4a" stroke-width="0.55" />
<line x1="422.40" y1="113.60" x2="422.40" y2="116.20" stroke="#4a4a4a" stroke-width="0.55" />
<line x1="426.80" y1="113.60" x2="426.80" y2="116.20" stroke="#4a4a4a" stroke-width="0.55" />
<line x1="431.20" y1="113.60" x2="431.20" y2="116.20" stroke="#4a4a4a" stroke-width="0.55" />
<line x1="435.60" y1="113.60" x2="435.60" y2="116.20" stroke="#4a4a4a" stroke-width="0.55" />
<line x1="440.00" y1="113.60" x2="440.00" y2="116.20" stroke="#4a4a4a" stroke-width="0.55" />
<line x1="237.30" y1="70.00" x2="237.30" y2="73.00" stroke="#333" stroke-width="0.7" />
<line x1="237.30" y1="113.20" x2="237.30" y2="120.00" stroke="#222" stroke-width="0.9" />
<line x1="299.60" y1="70.00" x2="299.60" y2="73.00" stroke="#333" stroke-width="0.7" />
<line x1="299.60" y1="113.20" x2="299.60" y2="120.00" stroke="#222" stroke-width="0.9" />
<line x1="362.50" y1="70.00" x2="362.50" y2="73.00" stroke="#333" stroke-width="0.7" />
<line x1="362.50" y1="113.20" x2="362.50" y2="120.00" stroke="#222" stroke-width="0.9" />
<line x1="425.00" y1="70.00" x2="425.00" y2="73.00" stroke="#333" stroke-width="0.7" />
<line x1="425.00" y1="113.20" x2="425.00" y2="120.00" stroke="#222" stroke-width="0.9" />
<rect x="233.00" y="73.20" width="66.00" height="6.30" fill="#f4ec10" stroke="#6a6400" stroke-width="0.4"/>
<line x1="242.43" y1="73.20" x2="242.43" y2="79.50" stroke="#5e5a00" stroke-width="0.6" />
<line x1="251.86" y1="73.20" x2="251.86" y2="79.50" stroke="#5e5a00" stroke-width="0.6" />
<line x1="261.29" y1="73.20" x2="261.29" y2="79.50" stroke="#5e5a00" stroke-width="0.6" />
<line x1="270.71" y1="73.20" x2="270.71" y2="79.50" stroke="#5e5a00" stroke-width="0.6" />
<line x1="280.14" y1="73.20" x2="280.14" y2="79.50" stroke="#5e5a00" stroke-width="0.6" />
<line x1="289.57" y1="73.20" x2="289.57" y2="79.50" stroke="#5e5a00" stroke-width="0.6" />
<rect x="237.50" y="79.50" width="57.60" height="7.60" fill="#0510de" />
<rect x="237.50" y="87.10" width="57.60" height="19.40" fill="#ffffff" stroke="#9a9a9a" stroke-width="0.4"/>
<rect x="237.50" y="106.50" width="57.60" height="6.70" fill="#0510de" />
<line x1="266.00" y1="79.50" x2="266.00" y2="87.00" stroke="#06108c" stroke-width="0.5" />
<line x1="266.00" y1="106.50" x2="266.00" y2="113.20" stroke="#06108c" stroke-width="0.5" />
<text x="266.00" y="98.19" transform="rotate(0.08 266.00 98.19)" font-size="5.6" fill="#222" text-anchor="middle" stroke="#222" stroke-width="0.16" >1</text>
<rect x="314.00" y="73.20" width="65.60" height="14.30" fill="#0510de" />
<rect x="314.00" y="87.50" width="65.60" height="19.00" fill="#ffffff" stroke="#e07a50" stroke-width="0.5"/>
<rect x="314.00" y="106.50" width="65.60" height="6.70" fill="#0510de" />
<line x1="345.00" y1="73.20" x2="345.00" y2="87.50" stroke="#06108c" stroke-width="0.5" />
<line x1="345.00" y1="106.50" x2="345.00" y2="113.20" stroke="#06108c" stroke-width="0.5" />
<line x1="359.00" y1="106.50" x2="359.00" y2="113.20" stroke="#06108c" stroke-width="0.5" />
<line x1="365.00" y1="106.50" x2="365.00" y2="113.20" stroke="#06108c" stroke-width="0.5" />
<line x1="371.00" y1="106.50" x2="371.00" y2="113.20" stroke="#06108c" stroke-width="0.5" />
<text x="346.20" y="94.73" transform="rotate(0.08 346.20 94.73)" font-size="6" fill="#111" font-weight="bold" text-anchor="middle" stroke="#111" stroke-width="0.16" >2</text>
<path d="M165.4,129.8 L163.4,132 L165.4,134.2" fill="none" stroke="#9a9a9a" stroke-width="0.7"/>
<path d="M455,130.8 L456.2,132 L455,133.2" fill="none" stroke="#b0b0b0" stroke-width="0.5"/>
<path d="M461.6,67.6 L462.8,66.4 L464,67.6" fill="none" stroke="#b0b0b0" stroke-width="0.5"/>
<path d="M461.6,124 L462.8,125.2 L464,124" fill="none" stroke="#b0b0b0" stroke-width="0.5"/>
<path d="M472.6,127.6 L471.4,128.8 L472.6,130" fill="none" stroke="#b0b0b0" stroke-width="0.5"/>
<path d="M463.6,64 V128" stroke="#e6e6e6" stroke-width="0.5"/>
<rect x="466.00" y="125.20" width="279.00" height="9.00" fill="#f4f4f4" />
<line x1="466.00" y1="125.20" x2="745.00" y2="125.20" stroke="#e2e2e2" stroke-width="0.5" />
<path d="M503,85.5 L535.5,67 L539,70.2 L539.5,72 H554 L555,70.5 L559,68 L577.5,94.5 L555,109.5 H519 Z" fill="none" stroke="#3a3a3a" stroke-width="0.7" stroke-linejoin="round"/>
<path d="M503,85.5 L519,109.5" stroke="#e08a2a" stroke-width="0.6" stroke-dasharray="1.2,0.8"/>
<path d="M519,109.8 H555 L577.5,94.8" fill="none" stroke="#e08a2a" stroke-width="0.6" stroke-dasharray="1.6,1"/>
<line x1="539.50" y1="72.00" x2="519.00" y2="108.60" stroke="#2f6f33" stroke-width="0.6" />
<line x1="554.00" y1="72.00" x2="554.00" y2="108.60" stroke="#2f6f33" stroke-width="0.6" />
<line x1="519.00" y1="107.60" x2="555.00" y2="107.60" stroke="#2f6f33" stroke-width="0.5" />
<rect x="525.60" y="86.20" width="8.00" height="5.80" fill="#f0f0f0" />
<rect x="551.60" y="86.20" width="4.60" height="5.80" fill="#f0f0f0" />
<text x="529.60" y="91.33" transform="rotate(0.08 529.60 91.33)" font-size="6" fill="#2f6f33" textLength="7.40" lengthAdjust="spacingAndGlyphs" text-anchor="middle" font-family="'Liberation Mono', monospace" stroke="#2f6f33" stroke-width="0.16" >10</text>
<text x="553.80" y="91.33" transform="rotate(0.08 553.80 91.33)" font-size="6" fill="#2f6f33" text-anchor="middle" font-family="'Liberation Mono', monospace" stroke="#2f6f33" stroke-width="0.16" >9</text>
<rect x="525.40" y="104.80" width="3.40" height="4.00" fill="#f0f0f0" />
<rect x="545.40" y="104.80" width="3.40" height="4.00" fill="#f0f0f0" />
<text x="527.00" y="108.68" transform="rotate(0.08 527.00 108.68)" font-size="5" fill="#2f6f33" text-anchor="middle" font-family="'Liberation Mono', monospace" stroke="#2f6f33" stroke-width="0.16" >1</text>
<text x="547.00" y="108.68" transform="rotate(0.08 547.00 108.68)" font-size="5" fill="#2f6f33" text-anchor="middle" font-family="'Liberation Mono', monospace" stroke="#2f6f33" stroke-width="0.16" >1</text>
<text x="537.00" y="111.38" transform="rotate(0.08 537.00 111.38)" font-size="5" fill="#e08a2a" text-anchor="middle" font-family="'Liberation Mono', monospace" stroke="#e08a2a" stroke-width="0.16" >7</text>
<text x="509.00" y="98.32" transform="rotate(0.08 509.00 98.32)" font-size="5.4" fill="#e08a2a" text-anchor="middle" font-family="'Liberation Mono', monospace" stroke="#e08a2a" stroke-width="0.16" >2</text>
<text x="566.80" y="102.92" transform="rotate(0.08 566.80 102.92)" font-size="5.4" fill="#e08a2a" text-anchor="middle" font-family="'Liberation Mono', monospace" stroke="#e08a2a" stroke-width="0.16" >4</text>
<line x1="580.00" y1="67.00" x2="580.00" y2="108.60" stroke="#2f6f33" stroke-width="0.7" />
<polygon points="580.00,65.40 581.50,69.40 578.50,69.40" fill="#2f6f33" />
<polygon points="580.00,110.00 581.50,106.00 578.50,106.00" fill="#2f6f33" />
<line x1="504.40" y1="113.20" x2="576.00" y2="113.20" stroke="#2f6f33" stroke-width="0.7" />
<polygon points="502.60,113.20 506.60,111.70 506.60,114.70" fill="#2f6f33" />
<polygon points="577.60,113.20 573.60,111.70 573.60,114.70" fill="#2f6f33" />
<text x="581.00" y="89.44" transform="rotate(0.08 581.00 89.44)" font-size="6.3" fill="#2f6f33" textLength="23.40" lengthAdjust="spacingAndGlyphs" font-weight="bold" font-family="'Liberation Mono', monospace" stroke="#2f6f33" stroke-width="0.16" >1139.7</text>
<text x="528.30" y="119.44" transform="rotate(0.08 528.30 119.44)" font-size="6.3" fill="#2f6f33" textLength="24.20" lengthAdjust="spacingAndGlyphs" font-weight="bold" font-family="'Liberation Mono', monospace" stroke="#2f6f33" stroke-width="0.16" >1955.5</text>
<rect x="772.60" y="124.20" width="10.40" height="10.40" fill="#e4e4e4" stroke="#adadad" stroke-width="0.5"/>
<polygon points="775.60,126.60 775.60,132.20 780.60,129.40" fill="#111" />
<path d="M768.6,127.8 L769.8,129 L768.6,130.2" fill="none" stroke="#b0b0b0" stroke-width="0.5"/>
<circle cx="751.80" cy="141.80" r="2.3" fill="#ffffff" stroke="#333" stroke-width="0.5"/>
<circle cx="751.80" cy="141.80" r="1.15" fill="#222"/>
<circle cx="751.80" cy="149.50" r="2.3" fill="#ffffff" stroke="#333" stroke-width="0.5"/>
<circle cx="751.80" cy="157.20" r="2.3" fill="#ffffff" stroke="#333" stroke-width="0.5"/>
<text x="756.60" y="143.60" transform="rotate(0.08 756.60 143.60)" font-size="4.8" fill="#222" stroke="#222" stroke-width="0.16" >X</text>
<text x="756.60" y="151.30" transform="rotate(0.08 756.60 151.30)" font-size="4.8" fill="#222" stroke="#222" stroke-width="0.16" >Y</text>
<text x="756.60" y="159.00" transform="rotate(0.08 756.60 159.00)" font-size="4.8" fill="#222" stroke="#222" stroke-width="0.16" >Z</text>
<line x1="773.60" y1="137.50" x2="773.60" y2="400.00" stroke="#e0e0e0" stroke-width="0.8" />
<line x1="774.40" y1="137.50" x2="774.40" y2="400.00" stroke="#fafafa" stroke-width="0.6" />
<rect x="769.40" y="146.20" width="9.00" height="4.50" fill="#0a76d8" />
<polygon points="750.40,245.00 753.60,245.00 753.60,247.60 756.80,247.60 757.90,249.00 757.90,264.40 754.40,270.40 754.40,273.00 751.20,273.00 751.20,269.40 754.90,263.40 754.90,250.60 752.00,250.60 750.40,249.20" fill="#111" />
<rect x="750.90" y="273.00" width="2.80" height="12.00" fill="#111" />
<text x="767.40" y="404.69" transform="rotate(0.08 767.40 404.69)" font-size="4.2" fill="#222" textLength="12.60" lengthAdjust="spacingAndGlyphs" stroke="#222" stroke-width="0.16" >-168.0</text>
<text x="746.20" y="411.90" transform="rotate(0.08 746.20 411.90)" font-size="4.8" fill="#222" textLength="37.60" lengthAdjust="spacingAndGlyphs" stroke="#222" stroke-width="0.16" >Rotation de la pièce</text>
<g clip-path="url(#vp)">
<rect x="150.50" y="137.50" width="594.50" height="268.90" fill="url(#gbg)" />
<polygon points="560.00,137.00 728.00,137.00 728.00,186.00 540.00,186.00" fill="#66b3ff" />
<polygon points="646.20,185.60 688.80,167.00 702.50,168.80 666.20,185.60" fill="#7c7c7c" />
<polygon points="666.20,185.60 702.50,168.80 706.20,171.20 676.20,185.60" fill="#a2a2a2" />
<polygon points="676.20,185.60 706.20,171.20 708.80,169.20 722.50,170.80 692.50,185.60" fill="#767676" />
<polygon points="692.50,185.60 722.50,170.80 728.40,172.00 728.40,185.60" fill="#a4a4a4" />
<polygon points="727.00,137.00 746.00,137.00 746.00,233.00 728.20,184.60" fill="#474747" />
<polygon points="318.70,269.00 342.20,266.80 546.00,185.50 728.20,184.60 746.00,232.00 746.00,268.00" fill="#525252" />
<line x1="728.20" y1="184.60" x2="745.60" y2="231.40" stroke="#0c0c0c" stroke-width="0.9" />
<g clip-path="url(#lowclip)">
<polygon points="150.00,474.13 424.00,350.50 496.00,323.75 750.00,223.96 750.00,229.15 150.00,478.70" fill="#f9f9f9" />
<polygon points="150.00,478.70 750.00,229.15 750.00,296.99 150.00,555.35" fill="#111111" />
<polygon points="150.00,381.77 470.00,260.88 470.00,270.86 150.00,390.11" fill="#7d7d7d" />
<polygon points="150.00,390.11 470.00,270.86 470.00,279.32 150.00,398.82" fill="#6e6e6e" />
<polygon points="150.00,398.82 470.00,279.32 470.00,294.71 150.00,418.46" fill="#a0a0a0" />
<polygon points="150.00,418.46 470.00,294.71 470.00,313.72 150.00,446.47" fill="#989898" />
<polygon points="150.00,446.47 470.00,313.72 470.00,325.55 150.00,465.05" fill="#8b8b8b" />
<polygon points="150.00,465.05 470.00,325.55 470.00,329.74 150.00,474.13" fill="#c6c6c6" />
<polygon points="470.00,264.00 750.00,264.00 750.00,209.25 470.00,306.53" fill="#9a9a9a" />
<polygon points="470.00,306.53 750.00,209.25 750.00,197.56 470.00,313.72" fill="#949494" />
<polygon points="470.00,313.72 750.00,197.56 750.00,224.29 470.00,327.04" fill="#8b8b8b" />
<polygon points="470.00,327.04 750.00,224.29 750.00,223.96 470.00,333.96" fill="#c6c6c6" />
<line x1="150" y1="390.11" x2="470" y2="270.86" stroke="#8e8e8e" stroke-width="1.0"/>
<line x1="150" y1="446.47" x2="750" y2="197.56" stroke="#4c4c4c" stroke-width="0.8"/>
<line x1="470" y1="306.53" x2="750" y2="209.25" stroke="#5c5c5c" stroke-width="0.6"/>
<line x1="150" y1="418.46" x2="470" y2="294.71" stroke="#a6a6a6" stroke-width="1.2"/>
</g>
<polygon points="255.00,262.00 312.00,262.00 312.00,321.50 262.00,339.00" fill="#000000" />
<polygon points="150.50,196.00 306.75,137.50 470.00,137.50 470.00,190.00 150.50,240.00" fill="#939393" />
<polygon points="150.00,196.19 470.00,76.38 470.00,81.38 150.00,201.54" fill="#b4b4b4" />
<polygon points="150.00,201.54 470.00,81.38 470.00,88.52 150.00,209.18" fill="#9c9c9c" />
<polygon points="150.00,209.18 470.00,88.52 470.00,94.23 150.00,215.29" fill="#a9a9a9" />
<polygon points="150.00,215.29 470.00,94.23 470.00,103.15 150.00,224.84" fill="#8f8f8f" />
<polygon points="150.00,224.84 470.00,103.15 470.00,112.08 150.00,234.39" fill="#969696" />
<polygon points="150.00,234.39 470.00,112.08 470.00,133.50 150.00,257.31" fill="#8a8a8a" />
<polygon points="258.00,247.50 276.70,240.00 276.70,198.00 327.00,190.00 327.00,250.00 316.50,271.50 297.70,265.50 267.50,257.00" fill="#6f6f6f" />
<polygon points="278.00,191.00 293.00,181.20 306.00,175.60 326.00,190.60 314.00,195.50 277.00,197.00" fill="#3a3ab2" />
<polygon points="315.50,194.60 326.00,190.60 326.00,195.20" fill="#fafafa" />
<polygon points="272.00,188.50 291.00,182.00 293.50,183.50 293.50,186.50 279.00,191.50" fill="#c65c10" />
<polygon points="272.00,188.50 291.00,182.00 293.50,183.50 279.40,189.60" fill="#e47c20" />
<polygon points="277.00,195.00 295.00,187.50 312.00,189.50 314.50,191.50 314.00,194.00 302.00,197.50 277.00,201.00" fill="#d0d000" />
<polygon points="277.00,197.40 290.00,196.20 291.00,193.60 302.00,193.80 314.00,192.60 314.00,194.00 302.00,197.50 277.00,201.00" fill="#f6f620" />
<polygon points="150.00,233.90 271.75,188.75 276.75,193.50 276.75,240.00 258.75,247.50 267.20,257.00 266.20,287.50 250.00,300.00 246.00,303.75 264.25,308.00 264.25,357.00 150.00,404.00" fill="#0707ac" />
<polygon points="150.00,233.90 271.75,188.75 276.75,193.50 150.00,247.00" fill="#0b0bb2" />
<polygon points="150.00,289.50 258.75,247.50 262.50,252.00 150.00,297.50" fill="#05059e" />
<polygon points="150.00,297.50 262.50,252.00 267.20,257.00 267.00,262.00 150.00,309.00" fill="#0909b0" />
<polygon points="150.00,327.00 246.00,301.00 264.25,308.00 264.25,312.00 150.00,337.00" fill="#05059c" />
<polygon points="266.20,287.50 250.00,300.00 246.00,303.75 264.25,308.00 266.20,308.00" fill="#00003c" />
<polygon points="150.00,372.00 264.25,332.00 264.25,334.00 150.00,374.50" fill="#04049a" />
<polygon points="267.20,256.00 297.80,265.20 292.60,275.20 266.80,266.40" fill="#9c9c9c" />
<path d="M267.2,256.4 L297.8,265.6" stroke="#e07818" stroke-width="1.5"/>
<path d="M266.8,265.8 L293,275" stroke="#e07818" stroke-width="2.0"/>
<path d="M297.8,265.4 L292.8,275" stroke="#d8d8d8" stroke-width="0.8"/>
<polygon points="297.80,265.40 315.00,277.00 314.00,278.00 294.60,271.40" fill="#5c5c5c" />
<polygon points="335.00,170.00 418.00,137.50 567.50,137.50 567.50,160.00 340.00,249.50 340.00,180.00" fill="url(#gpunch)" />
<polygon points="335.00,170.00 418.00,137.50 442.00,137.50 340.60,180.00" fill="#b8b8b8" />
<polygon points="340.00,249.50 567.50,160.00 546.00,185.50 342.25,266.75 327.25,266.00" fill="#848484" stroke="#848484" stroke-width="0.7"/>
<line x1="342.25" y1="266.75" x2="546.00" y2="185.50" stroke="#2a2a2a" stroke-width="0.5" />
<polygon points="308.00,173.75 323.00,170.00 334.25,170.00 341.00,180.00 340.00,249.50 327.25,266.00 318.25,267.50 316.50,271.50 326.50,249.50 326.50,193.75" fill="#dedede" />
<polygon points="334.25,170.00 341.00,180.00 340.00,249.50 337.00,249.50 337.00,181.00" fill="#cfcfcf" />
<polygon points="323.30,278.00 430.00,278.00 424.00,288.50 323.30,327.00" fill="#a7a7a7" />
<polygon points="309.70,276.70 316.50,281.30 323.30,279.00 323.30,326.60 313.40,329.00 313.40,326.60 309.70,326.60" fill="#dcdcdc" />
<polygon points="318.70,281.00 323.30,279.60 323.30,327.00 318.70,328.00 318.70,281.00" fill="#cdcdcd" />
<polygon points="424.00,290.00 436.00,279.00 450.00,279.00 462.50,312.00 462.00,348.50 427.50,347.50 427.30,332.00 426.00,332.00 426.00,326.00 431.00,326.00 431.00,306.00" fill="#0cf0f2" />
<polygon points="450.00,279.00 487.50,277.50 496.00,292.50 462.50,312.00" fill="#08dede" />
<polygon points="462.50,312.00 496.00,292.50 496.00,334.00 462.00,348.50" fill="#07cfd2" />
<polygon points="318.70,267.50 746.00,263.80 746.00,274.40 318.70,279.80" fill="#c2c2c2" />
<polygon points="318.70,267.30 746.00,263.70 746.00,265.40 318.70,269.50" fill="#dc781c" />
<polygon points="318.70,275.40 746.00,271.40 746.00,274.50 318.70,279.90" fill="#df7a1c" />
<text x="433.60" y="230.65" transform="rotate(0.08 433.60 230.65)" font-size="5.2" fill="#ffffff" textLength="6.60" lengthAdjust="spacingAndGlyphs" font-weight="bold" stroke="#ffffff" stroke-width="0.16" >10</text>
<text x="540.60" y="266.49" transform="rotate(0.08 540.60 266.49)" font-size="4.2" fill="#ffffff" font-weight="bold" text-anchor="middle" stroke="#ffffff" stroke-width="0.16" >8</text>
<text x="540.60" y="275.89" transform="rotate(0.08 540.60 275.89)" font-size="4.2" fill="#ffffff" font-weight="bold" text-anchor="middle" stroke="#ffffff" stroke-width="0.16" >7</text>
<text x="422.00" y="276.69" transform="rotate(0.08 422.00 276.69)" font-size="4.2" fill="#ffffff" font-weight="bold" text-anchor="middle" stroke="#ffffff" stroke-width="0.16" >1</text>
<text x="678.80" y="274.09" transform="rotate(0.08 678.80 274.09)" font-size="4.2" fill="#ffffff" font-weight="bold" text-anchor="middle" stroke="#ffffff" stroke-width="0.16" >1</text>
</g>
<text x="150.60" y="415.30" transform="rotate(0.08 150.60 415.30)" font-size="4.8" fill="#222" textLength="5.80" lengthAdjust="spacingAndGlyphs" stroke="#222" stroke-width="0.16" >Pls</text>
<rect x="158.60" y="407.20" width="11.20" height="11.00" fill="#e4e4e4" stroke="#adadad" stroke-width="0.5"/>
<rect x="171.60" y="407.20" width="11.20" height="11.00" fill="#e4e4e4" stroke="#adadad" stroke-width="0.5"/>
<polygon points="166.60,410.00 166.60,415.60 161.60,412.80" fill="#111" />
<polygon points="174.80,410.00 174.80,415.60 179.80,412.80" fill="#111" />
<text x="150.60" y="425.30" transform="rotate(0.08 150.60 425.30)" font-size="4.8" fill="#222" textLength="29.50" lengthAdjust="spacingAndGlyphs" stroke="#222" stroke-width="0.16" >Par programme</text>
<text x="150.60" y="432.70" transform="rotate(0.08 150.60 432.70)" font-size="4.8" fill="#222" textLength="12.60" lengthAdjust="spacingAndGlyphs" stroke="#222" stroke-width="0.16" >Par pli</text>
<circle cx="262.00" cy="413.60" r="2.0" fill="#ffffff" stroke="#b8b8b8" stroke-width="0.5"/>
<text x="267.00" y="415.30" transform="rotate(0.08 267.00 415.30)" font-size="4.8" fill="#a8a8a8" textLength="24.50" lengthAdjust="spacingAndGlyphs" stroke="#a8a8a8" stroke-width="0.16" >aide au pliage</text>
<circle cx="371.00" cy="413.60" r="2.0" fill="#ffffff" stroke="#333" stroke-width="0.5"/>
<circle cx="371.00" cy="413.60" r="1.00" fill="#222"/>
<text x="376.00" y="415.30" transform="rotate(0.08 376.00 415.30)" font-size="4.8" fill="#222" textLength="28.50" lengthAdjust="spacingAndGlyphs" stroke="#222" stroke-width="0.16" >Mesure d'angle</text>
<circle cx="482.50" cy="413.60" r="2.0" fill="#ffffff" stroke="#b8b8b8" stroke-width="0.5"/>
<text x="488.00" y="415.30" transform="rotate(0.08 488.00 415.30)" font-size="4.8" fill="#a8a8a8" textLength="23.00" lengthAdjust="spacingAndGlyphs" stroke="#a8a8a8" stroke-width="0.16" >Bras d'appui</text>
<rect x="588" y="411" width="4.8" height="4.8" fill="#fff" stroke="#333" stroke-width="0.5"/>
<text x="595.20" y="415.30" transform="rotate(0.08 595.20 415.30)" font-size="4.8" fill="#222" textLength="38.00" lengthAdjust="spacingAndGlyphs" stroke="#222" stroke-width="0.16" >Controle de collision</text>
<text x="709.00" y="415.70" transform="rotate(0.08 709.00 415.70)" font-size="4.8" fill="#222" textLength="23.00" lengthAdjust="spacingAndGlyphs" stroke="#222" stroke-width="0.16" >Toggle axes</text>
<rect x="733.40" y="407.20" width="11.60" height="11.60" fill="#e4e4e4" stroke="#adadad" stroke-width="0.5"/>
<polygon points="736.80,410.20 736.80,415.80 741.80,413.00" fill="#111" />
<circle cx="436.00" cy="431.00" r="2.0" fill="#ffffff" stroke="#333" stroke-width="0.5"/>
<text x="441.00" y="432.70" transform="rotate(0.08 441.00 432.70)" font-size="4.8" fill="#222" textLength="11.50" lengthAdjust="spacingAndGlyphs" stroke="#222" stroke-width="0.16" >AMZ1</text>
<rect x="723.6" y="427.2" width="21.8" height="7.2" fill="#fff" stroke="#7a7a7a" stroke-width="0.5"/>
<text x="725.40" y="432.29" transform="rotate(0.08 725.40 432.29)" font-size="4.2" fill="#222" stroke="#222" stroke-width="0.16" >0.0</text>
<rect x="740.00" y="434.60" width="3.60" height="9.40" fill="#c4c4c4" />
<line x1="150.50" y1="439.40" x2="762.50" y2="439.40" stroke="#dcdcdc" stroke-width="0.6" />
<line x1="150.50" y1="445.70" x2="762.50" y2="445.70" stroke="#a2a2a2" stroke-width="1.2" />
<rect x="150.60" y="446.00" width="612.00" height="5.60" fill="#f5f5f5" />
<line x1="150.60" y1="445.60" x2="150.60" y2="451.60" stroke="#8a8a8a" stroke-width="0.6" />
<line x1="150.60" y1="451.50" x2="762.50" y2="451.50" stroke="#d0d0d0" stroke-width="0.5" />
<text x="151.40" y="450.09" transform="rotate(0.08 151.40 450.09)" font-size="4.2" fill="#222" textLength="34.00" lengthAdjust="spacingAndGlyphs" stroke="#222" stroke-width="0.16" >avant pli num. 10</text>
<line x1="150.20" y1="137.50" x2="150.20" y2="406.40" stroke="#b4b4b4" stroke-width="0.5" />
</svg>
</body></html>
